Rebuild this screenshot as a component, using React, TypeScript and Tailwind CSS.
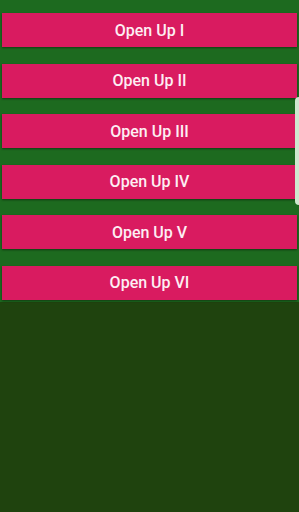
import React from "react";

const items = ["Open Up I", "Open Up II", "Open Up III", "Open Up IV", "Open Up V", "Open Up VI"];

export default function App() {
  return (
    <div
      className="relative w-[299px] h-[512px] flex flex-col bg-[#1f430e] overflow-hidden"
      style={{ fontFamily: "Roboto, 'Noto Sans', sans-serif" }}
    >
      <div className="bg-[#1d6a1f] pt-[13px] pb-[2px] px-[2px] flex flex-col gap-[16.6px]">
        {items.map((label) => (
          <button
            key={label}
            className="h-[34px] w-[295px] bg-[#d91b60] text-[#fdeef3] text-[16px] font-medium pt-[1px] shadow-[0_1px_2px_rgba(0,0,0,0.45)] flex items-center justify-center"
          >
            {label}
          </button>
        ))}
      </div>
      <div className="absolute right-0 top-[97px] w-[4px] h-[108px] rounded-l-full bg-[#cfe8cf]" />
    </div>
  );
}
